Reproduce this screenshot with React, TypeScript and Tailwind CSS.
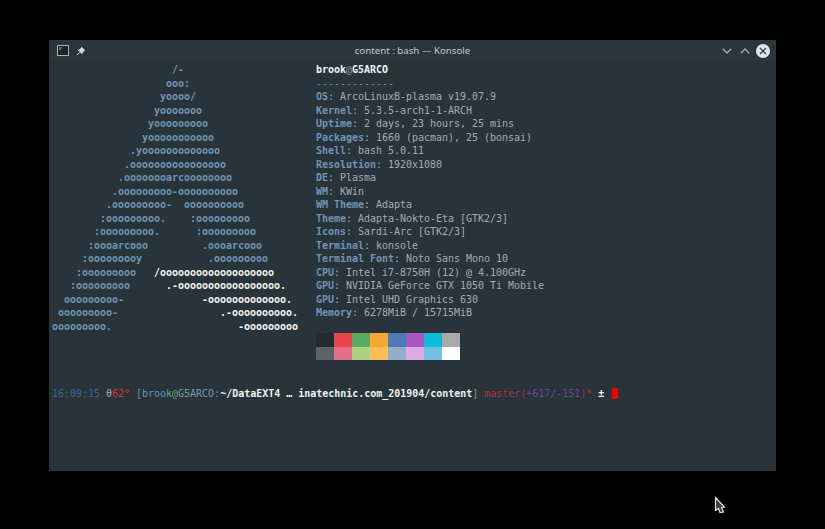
const mono = { fontFamily: '"DejaVu Sans Mono", "Liberation Mono", monospace' };

// [blue part, white part]
const logo: [string, string?][] = [
  ["                    /-"],
  ["                   ooo:"],
  ["                  yoooo/"],
  ["                 yooooooo"],
  ["                yooooooooo"],
  ["               yooooooooooo"],
  ["             .yooooooooooooo"],
  ["            .oooooooooooooooo"],
  ["           .oooooooarcoooooooo"],
  ["          .ooooooooo-oooooooooo"],
  ["         .ooooooooo-  oooooooooo"],
  ["        :ooooooooo.    :ooooooooo"],
  ["       :ooooooooo.      :ooooooooo"],
  ["      :oooarcooo         .oooarcooo"],
  ["     :ooooooooy           .ooooooooo"],
  ["    :ooooooooo   ", "/ooooooooooooooooooo"],
  ["   :ooooooooo      ", ".-ooooooooooooooooo."],
  ["  ooooooooo-             ", "-ooooooooooooo."],
  [" ooooooooo-                 ", ".-oooooooooo."],
  ["ooooooooo.                     ", "-ooooooooo"],
];

const info: [string, string][] = [
  ["OS", "ArcoLinuxB-plasma v19.07.9"],
  ["Kernel", "5.3.5-arch1-1-ARCH"],
  ["Uptime", "2 days, 23 hours, 25 mins"],
  ["Packages", "1660 (pacman), 25 (bonsai)"],
  ["Shell", "bash 5.0.11"],
  ["Resolution", "1920x1080"],
  ["DE", "Plasma"],
  ["WM", "KWin"],
  ["WM Theme", "Adapta"],
  ["Theme", "Adapta-Nokto-Eta [GTK2/3]"],
  ["Icons", "Sardi-Arc [GTK2/3]"],
  ["Terminal", "konsole"],
  ["Terminal Font", "Noto Sans Mono 10"],
  ["CPU", "Intel i7-8750H (12) @ 4.100GHz"],
  ["GPU", "NVIDIA GeForce GTX 1050 Ti Mobile"],
  ["GPU", "Intel UHD Graphics 630"],
  ["Memory", "6278MiB / 15715MiB"],
];

const swatches = [
  ["bg-[#232b31]", "bg-[#e9444f]", "bg-[#5cab62]", "bg-[#f6a92f]", "bg-[#4c7ab5]", "bg-[#a957c0]", "bg-[#0dbbd6]", "bg-[#aaaaaa]"],
  ["bg-[#5b6367]", "bg-[#e46f87]", "bg-[#a8d27f]", "bg-[#fdbe56]", "bg-[#93aecb]", "bg-[#e2a9ea]", "bg-[#6dc2e2]", "bg-white"],
];

export default function App() {
  return (
    <div className="w-[825px] h-[529px] bg-black relative overflow-hidden pt-[40px] pl-[49px]">
      {/* Konsole window */}
      <div className="w-[727px] h-[431px] bg-[#29333a] flex flex-col">
        <div className="h-[21px] shrink-0 flex items-center px-[8px] bg-[#2b353c]">
          <div className="flex-1 flex items-center">
            <svg width="12" height="11" viewBox="0 0 12 11" className="shrink-0">
              <rect x="0.5" y="0.5" width="11" height="10" fill="#1d2429" stroke="#a9b0b3" />
              <path d="M2 3h3M2 4.5h1.5" stroke="#5cb85c" />
            </svg>
            <svg width="10" height="10" viewBox="0 0 10 10" className="ml-[7px] shrink-0">
              <path d="M5.6 0.8 9.2 4.4 8.2 4.9 6.6 6.5 6.3 8.4 1.6 3.7 3.5 3.4 5.1 1.8Z" fill="#d5dadc" />
              <path d="M3.6 6.4 1 9" stroke="#d5dadc" />
            </svg>
          </div>
          <div className="pt-[1px] text-[9.7px] text-[#c2c7ca] font-['Noto_Sans',sans-serif] whitespace-pre">
            content : bash — Konsole
          </div>
          <div className="flex-1 flex items-center justify-end">
            <svg width="10" height="6" viewBox="0 0 10 6" className="shrink-0">
              <path d="M0.8 0.8 5 5 9.2 0.8" fill="none" stroke="#a5adb1" strokeWidth="1.3" />
            </svg>
            <svg width="10" height="6" viewBox="0 0 10 6" className="ml-[8px] shrink-0">
              <path d="M0.8 5.2 5 1 9.2 5.2" fill="none" stroke="#a5adb1" strokeWidth="1.3" />
            </svg>
            <div className="ml-[6px] mr-[-2px] w-[14px] h-[14px] rounded-full bg-[#dfe4e7] flex items-center justify-center shrink-0">
              <svg width="8" height="8" viewBox="0 0 8 8">
                <path d="M1 1 7 7M7 1 1 7" stroke="#3c474e" strokeWidth="1.4" />
              </svg>
            </div>
          </div>
        </div>

        {/* terminal */}
        <div className="pl-[3px] pt-[2px] text-[10px] leading-[13.5px] tracking-[-0.02px] text-[#a3adb3] whitespace-pre" style={mono}>
          <div className="flex">
            <div className="w-[264px] shrink-0 font-bold text-[#7094b4]">
              {logo.map(([blue, white], i) => (
                <div key={i} className="h-[13.5px]">
                  {blue}
                  {white && <span className="text-[#f0f3f4]">{white}</span>}
                </div>
              ))}
            </div>
            <div>
              <div className="h-[13.5px] font-bold text-[#f0f3f4]">
                brook<span className="text-[#7f9aaf] font-normal">@</span>G5ARCO
              </div>
              <div className="h-[13.5px] text-[#7c8a94]">-------------</div>
              {info.map(([label, value], i) => (
                <div key={i} className="h-[13.5px]">
                  <span className="font-bold text-[#7094b4]">{label}</span>: {value}
                </div>
              ))}
              <div className="h-[13.5px]" />
              {swatches.map((row, i) => (
                <div key={i} className="flex h-[13.5px]">
                  {row.map((c) => (
                    <div key={c} className={`w-[18px] ${c}`} />
                  ))}
                </div>
              ))}
            </div>
          </div>

          {/* prompt */}
          <div className="mt-[27px] h-[13.5px] flex items-center">
            <span className="text-[#3a6590]">16:09:15 </span>
            <span className="text-[#a3adb3]">θ</span>
            <span className="text-[#d6323f]">62°</span>
            <span className="text-[#7f8e98]"> [</span>
            <span className="text-[#7094b4]">brook</span>
            <span className="text-[#5aa860]">@</span>
            <span className="text-[#7d9ab3]">G5ARCO</span>
            <span className="text-[#7f8e98]">:</span>
            <span className="font-bold text-[#eef1f2]">~/DataEXT4 … inatechnic.com_201904/content</span>
            <span className="text-[#7f8e98]">] </span>
            <span className="text-[#a8324a]">master</span>
            <span className="text-[#a8324a]">(</span>
            <span className="text-[#6a4b95]">+617/-151</span>
            <span className="text-[#a8324a]">)*</span>
            <span className="font-bold text-[#eef1f2]"> ± </span>
            <span className="ml-[2px] w-[6px] h-[11px] bg-[#f00000]" />
          </div>
        </div>
      </div>

      {/* mouse pointer */}
      <svg width="12" height="18" viewBox="0 0 12 18" className="absolute left-[714px] top-[496px]">
        <path d="M1.5 1.5 10.5 11 7.5 11.5 9.5 16 6 16.5 4.5 12.5 1.5 14.5Z" fill="#3c3c3c" stroke="#e4e4e4" strokeWidth="1.2" />
      </svg>
    </div>
  );
}
